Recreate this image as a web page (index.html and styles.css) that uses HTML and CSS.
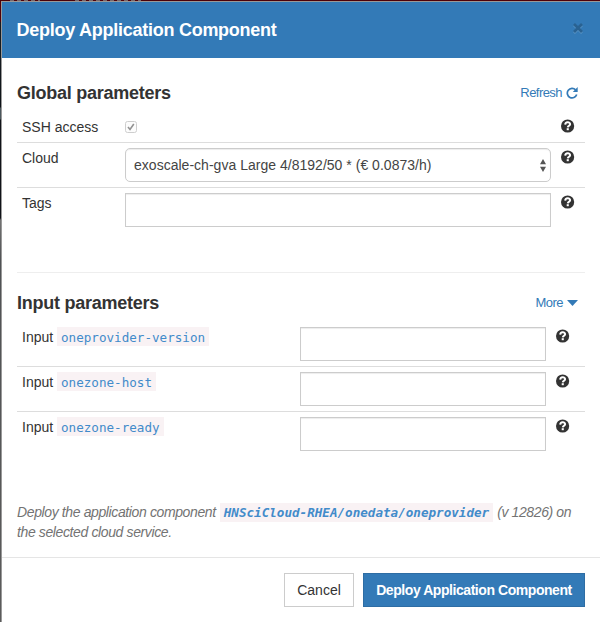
FILE: index.html
```html
<!DOCTYPE html>
<html lang="en">
<head>
<meta charset="utf-8">
<title>Deploy Application Component</title>
<link rel="stylesheet" href="styles.css">
</head>
<body>
<svg class="defs" width="0" height="0">
  <symbol id="help" viewBox="0 0 14 14">
    <circle cx="6.6" cy="7" r="6.6" fill="#333"/>
    <path d="M4.2 5.6C4.3 2.6 9.2 2.6 9.1 5.2C9 6.7 7 6.7 6.8 8.3" fill="none" stroke="#fff" stroke-width="2"/>
    <rect x="5.7" y="9.2" width="2.1" height="2" fill="#fff"/>
  </symbol>
</svg>
<div class="modal">
  <header class="modal-header">
    <h1 class="title">Deploy Application Component</h1>
    <button class="close" aria-label="Close"><svg width="12" height="12" viewBox="0 0 12 12"><path d="M2 3l8 8M10 3l-8 8" stroke="#5d96c6" stroke-width="2.6"/><path d="M2 2l8 8M10 2l-8 8" stroke="#296292" stroke-width="2.8"/></svg></button>
  </header>
  <main class="modal-body">
    <section class="global">
      <div class="section-head">
        <h2 class="h-global">Global parameters</h2>
        <a class="link refresh"><span>Refresh</span><svg width="12" height="12" viewBox="0 0 12 12"><path d="M9.6 2.8A4.8 4.8 0 1 0 10.7 7.6" fill="none" stroke="#337ab7" stroke-width="1.7"/><path d="M11.7 0v4.9H6.8z" fill="#337ab7"/></svg></a>
      </div>
      <div class="row row-ssh">
        <span class="label l-ssh">SSH access</span>
        <span class="check"><svg width="12" height="12" viewBox="0 0 12 12"><rect x=".5" y=".5" width="11" height="11" rx="2" fill="#fcfcfc" stroke="#cecece"/><path d="M3 6l2 2.5L8.8 3" fill="none" stroke="#929292" stroke-width="1.6"/></svg></span>
        <svg class="help"><use href="#help"/></svg>
      </div>
      <div class="row">
        <span class="label l-cloud">Cloud</span>
        <div class="control select"><span class="value">exoscale-ch-gva Large 4/8192/50 * (€ 0.0873/h)</span><svg width="6" height="13" viewBox="0 0 6 13"><path d="M0 5.2L3 0l3 5.2zM0 7.8h6L3 13z" fill="#555"/></svg></div>
        <svg class="help"><use href="#help"/></svg>
      </div>
      <div class="row">
        <span class="label l-tags">Tags</span>
        <div class="control"></div>
        <svg class="help"><use href="#help"/></svg>
      </div>
    </section>
    <section class="inputs">
      <div class="section-head">
        <h2 class="h-input">Input parameters</h2>
        <a class="link more"><span>More</span><svg width="11" height="6" viewBox="0 0 11 6"><path d="M0 0h11L5.5 6z" fill="#337ab7"/></svg></a>
      </div>
      <div class="row first">
        <span class="label"><span class="word">Input</span><code>oneprovider-version</code></span>
        <div class="control"></div>
        <svg class="help"><use href="#help"/></svg>
      </div>
      <div class="row">
        <span class="label"><span class="word">Input</span><code>onezone-host</code></span>
        <div class="control"></div>
        <svg class="help"><use href="#help"/></svg>
      </div>
      <div class="row">
        <span class="label"><span class="word">Input</span><code>onezone-ready</code></span>
        <div class="control"></div>
        <svg class="help"><use href="#help"/></svg>
      </div>
    </section>
    <p class="note"><span>Deploy the application component</span><code>HNSciCloud-RHEA/onedata/oneprovider</code><span>(v 12826) on</span><br><span>the selected cloud service.</span></p>
  </main>
  <footer class="modal-footer">
    <button class="btn cancel"><span>Cancel</span></button>
    <button class="btn primary"><span>Deploy Application Component</span></button>
  </footer>
</div>
</body>
</html>
```
FILE: styles.css
```css
* { box-sizing: border-box; }
html { height: 100%; }
body {
  margin: 0;
  height: 622px;
  overflow: hidden;
  padding: 1px 0 0 1px;
  font: 14px/20px "Liberation Sans", Arial, sans-serif;
  color: #333;
  background:
    repeating-linear-gradient(90deg, #76686a 0 4px, #500008 4px 7px) 10px 0 / 30px 1px no-repeat,
    repeating-linear-gradient(90deg, #76686a 0 4px, #500008 4px 7px) 75px 0 / 66px 1px no-repeat,
    linear-gradient(90deg, #4a0006, #500008) 0 0 / 100% 1px no-repeat,
    linear-gradient(#500008 0 22px, #151b20 22px 58px, #0c1116 107px, #4b575c 108px 119px, #101218 120px 218px, #737373 220px, #505254 260px, #5c5c5c);
}
svg { display: block; flex: none; }
.defs { position: absolute; }
h1, h2, p { margin: 0; }
.modal {
  height: 621px;
  background: #fff;
  border: solid #999;
  border-width: 1px 0 0 1px;
}
.modal-header {
  height: 56px;
  padding: 0 16px 0 14.5px;
  background: #337ab7;
  display: flex;
  justify-content: space-between;
}
.title { font-size: 18px; line-height: 56px; color: #fff; white-space: nowrap; letter-spacing: -.26px; }
.close { border: 0; padding: 0; margin-top: 20px; height: 12px; background: none; }
.modal-body { height: 499px; padding: 0 15px; }
.section-head { display: flex; justify-content: space-between; }
h2 { font-size: 18px; line-height: 20px; white-space: nowrap; letter-spacing: -.26px; }
.link { display: flex; font-size: 13px; line-height: 20px; color: #337ab7; letter-spacing: -.55px; }
.global { height: 215px; padding-top: 25px; border-bottom: 1px solid #eee; }
.global .section-head { height: 28px; }
.refresh { padding-right: 7px; gap: 4px; }
.refresh svg { margin-top: 4px; }
.row { height: 45px; border-top: 1px solid #ddd; padding: 5px; display: flex; }
.row-ssh, .first { border-top-color: transparent; }
.row-ssh { height: 31px; }
.label { width: 103px; white-space: nowrap; }
.check { width: 426px; padding-top: 4px; }
.control {
  width: 426px;
  height: 34px;
  border: 1px solid #ccc;
  box-shadow: inset 0 1px 1px rgba(0,0,0,.075);
}
.select {
  border-radius: 5px;
  padding: 0 4px 0 8px;
  display: flex;
  align-items: center;
  justify-content: space-between;
  color: #444;
}
.value { white-space: nowrap; letter-spacing: .02px; }
.help { width: 14px; height: 14px; margin: 2px 0 0 10px; }
.inputs { height: 212px; padding-top: 20px; }
.inputs .section-head { height: 28px; }
.more { padding-right: 7px; gap: 4px; }
.more svg { margin-top: 7px; }
.inputs .label { width: 278px; display: flex; }
.word { width: 35px; }
.inputs .control { width: 246px; }
code {
  font-family: "DejaVu Sans Mono", monospace;
  font-size: 12.6px;
  line-height: 15px;
  padding: 2px 4px;
  color: #428bca;
  background: #f9f2f4;
}
.inputs code { height: 19px; padding-top: 3px; }
.note { padding-top: 17px; font-style: italic; color: #737373; white-space: nowrap; letter-spacing: -.38px; }
.note code { margin: 0 4px; font-weight: bold; letter-spacing: 0; }
.modal-footer {
  height: 65px;
  border-top: 1px solid #e5e5e5;
  padding: 15px 15px 0;
  display: flex;
  justify-content: flex-end;
  gap: 9px;
}
.btn {
  height: 34px;
  width: 70px;
  padding: 0;
  border: 1px solid #ccc;
  background: #fff;
  color: #333;
  font: 14px/20px "Liberation Sans", Arial, sans-serif;
  white-space: nowrap;
}
.primary { width: 222px; background: #337ab7; border-color: #2e6da4; color: #fff; font-weight: bold; letter-spacing: -.44px; }
```
